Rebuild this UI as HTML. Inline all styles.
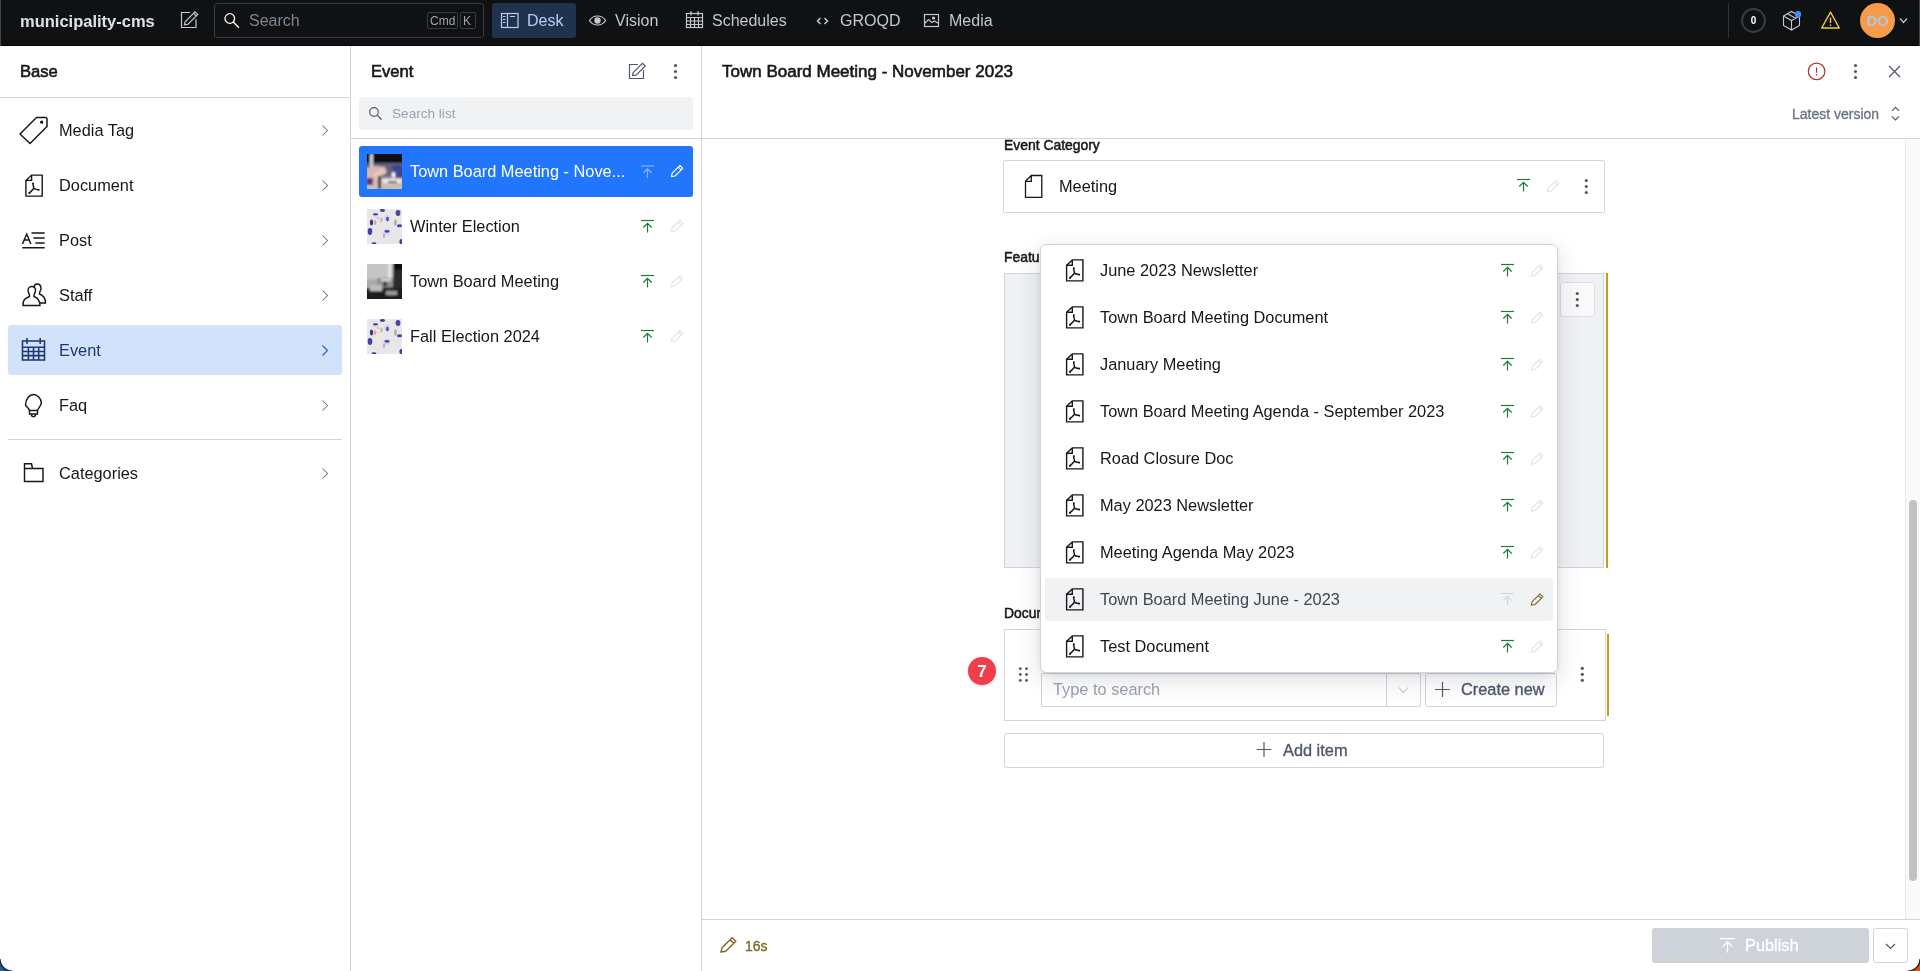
<!DOCTYPE html>
<html><head><meta charset="utf-8">
<style>
*{box-sizing:border-box;margin:0;padding:0}
html,body{width:1920px;height:971px;overflow:hidden;background:#fff}
body{position:relative;font-family:"Liberation Sans",sans-serif;color:#16171b}
.a{position:absolute}
.t{position:absolute;white-space:nowrap;line-height:20px;height:20px;margin-top:1px;will-change:transform}
.med{font-weight:normal;-webkit-text-stroke:0.35px currentColor}
.semi{font-weight:normal;-webkit-text-stroke:0.6px currentColor}
.b16{font-size:16.35px;margin-top:0}
.nav{font-size:16px;color:#c3c7cf}
svg{position:absolute}
#ov{position:absolute;left:0;top:0;width:1920px;height:971px;overflow:visible;pointer-events:none}
</style></head><body>

<!-- TOP BAR -->
<div class="a" style="left:0;top:0;width:1920px;height:46px;background:#101112;border-bottom:1px solid #050506"></div>
<div class="t" style="left:20px;top:10px;font-size:16.5px;font-weight:bold;color:#dfe1e6">municipality-cms</div>
<div class="a" style="left:214px;top:3px;width:270px;height:35px;border:1px solid #383b42;border-radius:3px"></div>
<div class="t" style="left:249px;top:10px;font-size:16px;color:#7c8494">Search</div>
<div class="a" style="left:427px;top:12px;width:31px;height:17px;border:1px solid #383b42;border-radius:2px"></div>
<div class="t" style="left:430px;top:11px;font-size:12px;color:#9ea5b1;line-height:18px">Cmd</div>
<div class="a" style="left:460px;top:12px;width:16px;height:17px;border:1px solid #383b42;border-radius:2px"></div>
<div class="t" style="left:463px;top:11px;font-size:12px;color:#9ea5b1;line-height:18px">K</div>
<div class="a" style="left:492px;top:3px;width:84px;height:35px;background:#21324d;border-radius:3px"></div>
<div class="t nav" style="left:527px;top:10px;color:#b3cffb">Desk</div>
<div class="t nav" style="left:615px;top:10px">Vision</div>
<div class="t nav" style="left:712px;top:10px">Schedules</div>
<div class="t nav" style="left:840px;top:10px">GROQD</div>
<div class="t nav" style="left:949px;top:10px">Media</div>
<div class="a" style="left:1728px;top:3px;width:1px;height:35px;background:#2f3238"></div>
<div class="a" style="left:1741px;top:8px;width:25px;height:25px;border:2px solid #393c43;border-radius:50%"></div>
<div class="t" style="left:1741px;top:10px;width:25px;text-align:center;font-size:10px;font-weight:bold;color:#fff">0</div>
<div class="a" style="left:1860px;top:3px;width:35px;height:35px;background:#f69a4b;border-radius:50%"></div>
<div class="t" style="left:1860px;top:10px;width:35px;text-align:center;font-size:15px;font-weight:bold;color:#b9c4d3;letter-spacing:-0.3px">DO</div>

<div class="a" style="left:0;top:0;width:1px;height:46px;background:#424747"></div>
<div class="a" style="left:1919px;top:0;width:1px;height:46px;background:#424747"></div>
<!-- PANE BORDERS -->
<div class="a" style="left:350px;top:46px;width:1px;height:925px;background:#d1d4db"></div>
<div class="a" style="left:701px;top:46px;width:1px;height:925px;background:#d1d4db"></div>
<div class="a" style="left:0;top:97px;width:350px;height:1px;background:#d1d4db"></div>
<div class="a" style="left:351px;top:138px;width:350px;height:1px;background:#d1d4db"></div>
<div class="a" style="left:702px;top:138px;width:1218px;height:1px;background:#d1d4db"></div>
<div class="a" style="left:702px;top:919px;width:1218px;height:1px;background:#d1d4db"></div>

<!-- PANE 1 -->
<div class="t semi" style="left:20px;top:60.5px;font-size:16.6px">Base</div>
<div class="a" style="left:8px;top:325px;width:334px;height:50px;background:#d2e2fa;border-radius:3px"></div>
<div class="a" style="left:8px;top:439px;width:334px;height:1px;background:#d1d4db"></div>
<div class="t b16" style="left:59px;top:120px">Media Tag</div>
<div class="t b16" style="left:59px;top:175px">Document</div>
<div class="t b16" style="left:59px;top:230px">Post</div>
<div class="t b16" style="left:59px;top:285px">Staff</div>
<div class="t b16" style="left:59px;top:340px;color:#1e3a75">Event</div>
<div class="t b16" style="left:59px;top:395px">Faq</div>
<div class="t b16" style="left:59px;top:463px">Categories</div>

<!-- PANE 2 -->
<div class="t semi" style="left:371px;top:60.5px;font-size:16.6px">Event</div>
<div class="a" style="left:359px;top:97px;width:334px;height:33px;background:#f1f2f4;border-radius:3px"></div>
<div class="t" style="left:392px;top:103px;font-size:13.6px;color:#9aa1ad">Search list</div>
<div class="a" style="left:359px;top:146px;width:334px;height:51px;background:#2276fc;border-radius:3px"></div>
<svg style="left:367px;top:154px" width="35" height="35" viewBox="0 0 35 35"><defs><filter id="blm" x="-20%" y="-20%" width="140%" height="140%"><feGaussianBlur stdDeviation="0.8"/></filter><clipPath id="cp"><rect width="35" height="35"/></clipPath></defs>
<g clip-path="url(#cp)"><rect width="35" height="35" fill="#8a8090"/><g filter="url(#blm)">
<rect x="-2" y="-2" width="39" height="11" fill="#0e1115"/>
<rect x="-2" y="9" width="39" height="13" fill="#62627a"/>
<rect x="25" y="11" width="12" height="14" fill="#3d4690"/>
<rect x="-2" y="24" width="39" height="13" fill="#cdbcb6"/>
<path d="M-1 14 L8 12 L18 13 L20 19 L10 24 L2 28 L-1 27 Z" fill="#dcb4b4"/>
<path d="M6 20 L16 14 L19 17 L9 25 Z" fill="#e8c6c0"/>
<rect x="-1" y="24" width="7" height="7" fill="#6a3070"/>
<rect x="11" y="22" width="3" height="13" fill="#2e3328"/>
<rect x="16" y="25" width="18" height="4" fill="#ececf0"/>
<rect x="21" y="27" width="9" height="1.6" fill="#2a2a2a"/>
<rect x="3" y="0" width="3" height="13" fill="#d0d0d4"/>
<ellipse cx="26.5" cy="21" rx="1.8" ry="3" fill="#ffffff"/>
</g></g></svg>
<svg style="left:367px;top:209px" width="35" height="35" viewBox="0 0 35 35"><rect width="35" height="35" fill="#e9e6ea"/>
<g opacity="0.9">
<ellipse cx="8.5" cy="6" rx="3.2" ry="2.2" fill="#d8d4ee"/><ellipse cx="8.5" cy="5.3" rx="2.6" ry="1.1" fill="#2c2c8c"/>
<ellipse cx="15.5" cy="1.5" rx="2.6" ry="1.4" fill="#30308e"/>
<ellipse cx="20" cy="9" rx="2.6" ry="3.4" fill="#d4d0f0"/><ellipse cx="20.5" cy="10" rx="1.4" ry="2.2" fill="#3a3aa6"/>
<ellipse cx="31" cy="4" rx="2.4" ry="3" fill="#363698"/>
<ellipse cx="4.5" cy="13.5" rx="1.6" ry="3" fill="#27277a"/><ellipse cx="8" cy="13.5" rx="1.4" ry="2.6" fill="#e0a098"/>
<ellipse cx="32.5" cy="16.8" rx="2.6" ry="1.5" fill="#3434a2"/>
<ellipse cx="3" cy="22.5" rx="2.3" ry="3.4" fill="#3030a0"/>
<ellipse cx="20" cy="23" rx="3.6" ry="3.2" fill="#d6d2f2"/><ellipse cx="20" cy="22.3" rx="2.6" ry="1.4" fill="#34349e"/>
<ellipse cx="17" cy="26.5" rx="1" ry="2.6" fill="#c0a0a0"/>
<ellipse cx="7" cy="34.5" rx="2.4" ry="1.2" fill="#30308a"/><ellipse cx="34" cy="32.5" rx="1.6" ry="2.6" fill="#2c2c96"/>
<ellipse cx="28.5" cy="13.5" rx="1.3" ry="3.2" fill="#b0a888"/><ellipse cx="14.5" cy="11" rx="1.3" ry="2.4" fill="#c8b8a0"/>
<ellipse cx="11" cy="9" rx="1.5" ry="1" fill="#e8b0b0"/>
</g></svg>
<svg style="left:367px;top:264px" width="35" height="35" viewBox="0 0 35 35"><defs><filter id="bl3" x="-20%" y="-20%" width="140%" height="140%"><feGaussianBlur stdDeviation="0.8"/></filter><clipPath id="cp3"><rect width="35" height="35"/></clipPath></defs>
<g clip-path="url(#cp3)"><rect width="35" height="35" fill="#7a7a7a"/><g filter="url(#bl3)">
<rect x="-2" y="-2" width="29" height="17" fill="#c6c6c6"/>
<rect x="21" y="-2" width="3" height="17" fill="#e4e4e4"/>
<rect x="26" y="-2" width="11" height="39" fill="#2a2a2a"/>
<rect x="27" y="-2" width="10" height="8" fill="#080808"/>
<rect x="-2" y="15" width="12" height="9" fill="#aaaaaa"/>
<rect x="10" y="14" width="16" height="8" fill="#8f8f8f"/>
<rect x="-2" y="24" width="39" height="13" fill="#1e1e1e"/>
<rect x="3" y="21" width="12" height="6" fill="#bdbdbd"/>
<ellipse cx="18" cy="20" rx="2" ry="2" fill="#111"/>
<rect x="19" y="27" width="11" height="4" fill="#9a9a9a"/>
<rect x="14" y="15" width="10" height="2" fill="#dcdcdc"/>
</g></g></svg>
<svg style="left:367px;top:319px" width="35" height="35" viewBox="0 0 35 35"><rect width="35" height="35" fill="#e9e6ea"/>
<g opacity="0.9">
<ellipse cx="8.5" cy="6" rx="3.2" ry="2.2" fill="#d8d4ee"/><ellipse cx="8.5" cy="5.3" rx="2.6" ry="1.1" fill="#2c2c8c"/>
<ellipse cx="15.5" cy="1.5" rx="2.6" ry="1.4" fill="#30308e"/>
<ellipse cx="20" cy="9" rx="2.6" ry="3.4" fill="#d4d0f0"/><ellipse cx="20.5" cy="10" rx="1.4" ry="2.2" fill="#3a3aa6"/>
<ellipse cx="31" cy="4" rx="2.4" ry="3" fill="#363698"/>
<ellipse cx="4.5" cy="13.5" rx="1.6" ry="3" fill="#27277a"/><ellipse cx="8" cy="13.5" rx="1.4" ry="2.6" fill="#e0a098"/>
<ellipse cx="32.5" cy="16.8" rx="2.6" ry="1.5" fill="#3434a2"/>
<ellipse cx="3" cy="22.5" rx="2.3" ry="3.4" fill="#3030a0"/>
<ellipse cx="20" cy="23" rx="3.6" ry="3.2" fill="#d6d2f2"/><ellipse cx="20" cy="22.3" rx="2.6" ry="1.4" fill="#34349e"/>
<ellipse cx="17" cy="26.5" rx="1" ry="2.6" fill="#c0a0a0"/>
<ellipse cx="7" cy="34.5" rx="2.4" ry="1.2" fill="#30308a"/><ellipse cx="34" cy="32.5" rx="1.6" ry="2.6" fill="#2c2c96"/>
<ellipse cx="28.5" cy="13.5" rx="1.3" ry="3.2" fill="#b0a888"/><ellipse cx="14.5" cy="11" rx="1.3" ry="2.4" fill="#c8b8a0"/>
<ellipse cx="11" cy="9" rx="1.5" ry="1" fill="#e8b0b0"/>
</g></svg>
<div class="t b16" style="left:410px;top:161px;color:#fff">Town Board Meeting - Nove...</div>
<div class="t b16" style="left:410px;top:216px">Winter Election</div>
<div class="t b16" style="left:410px;top:271px">Town Board Meeting</div>
<div class="t b16" style="left:410px;top:326px">Fall Election 2024</div>

<!-- PANE 3 HEADER -->
<div class="t semi" style="left:722px;top:60.5px;font-size:17px">Town Board Meeting - November 2023</div>
<div class="t med" style="left:1792px;top:103px;font-size:14px;color:#6e7683">Latest version</div>

<!-- scrollbar -->
<div class="a" style="left:1905px;top:139px;width:15px;height:780px;background:#fafafa;border-left:1px solid #e8e8e8"></div>
<div class="a" style="left:1909px;top:500px;width:8px;height:381px;background:#c2c2c2;border-radius:4px"></div>

<!-- FORM -->
<div class="t" style="left:1004px;top:134px;font-size:13.9px;font-weight:normal;-webkit-text-stroke:0.5px currentColor">Event Category</div>
<div class="a" style="left:1003px;top:160px;width:602px;height:53px;border:1px solid #d1d4db;border-radius:2px"></div>
<div class="t b16" style="left:1059px;top:176px">Meeting</div>

<div class="t" style="left:1004px;top:246px;font-size:13.9px;font-weight:normal;-webkit-text-stroke:0.5px currentColor">Featured Image</div>
<div class="a" style="left:1004px;top:273px;width:600px;height:295px;background:#f0f1f4;border:1px solid #d1d4db"></div>
<div class="a" style="left:1606px;top:273px;width:2px;height:295px;background:#c59d1d"></div>
<div class="a" style="left:1560px;top:282px;width:35px;height:35px;background:#fafafb;border:1px solid #dcdfe5;border-radius:3px"></div>

<div class="t" style="left:1004px;top:602px;font-size:13.9px;font-weight:normal;-webkit-text-stroke:0.5px currentColor">Documents</div>
<div class="a" style="left:1004px;top:629px;width:602px;height:92px;border:1px solid #d1d4db"></div>
<div class="a" style="left:1607px;top:634px;width:2px;height:82px;background:#c59d1d"></div>
<div class="a" style="left:1041px;top:673px;width:380px;height:34px;border:1px solid #d1d4db;border-radius:2px"></div>
<div class="a" style="left:1386px;top:673px;width:1px;height:34px;background:#d1d4db"></div>
<div class="t b16" style="left:1053px;top:679px;color:#9aa3b0">Type to search</div>
<div class="a" style="left:1425px;top:673px;width:132px;height:34px;border:1px solid #d1d4db;border-radius:3px"></div>
<div class="t b16 med" style="left:1461px;top:679px;color:#50596a">Create new</div>
<div class="a" style="left:1004px;top:733px;width:600px;height:35px;border:1px solid #d1d4db;border-radius:3px"></div>
<div class="t b16 med" style="left:1283px;top:740px;color:#50596a">Add item</div>

<div class="a" style="left:968px;top:657px;width:28px;height:28px;background:#f03e4a;border-radius:50%;box-shadow:0 1px 3px rgba(0,0,0,.15)"></div>
<div class="t" style="left:968px;top:661px;width:28px;text-align:center;font-size:17px;font-weight:bold;color:#fff">7</div>

<!-- POPOVER -->
<div class="a" style="left:1040px;top:244px;width:518px;height:429px;background:#fff;border:1px solid #d1d4db;border-radius:6px;box-shadow:0 7px 24px rgba(22,30,45,.14),0 2px 6px rgba(22,30,45,.08)"></div>
<div class="a" style="left:1045px;top:578px;width:508px;height:43px;background:#f1f2f4;border-radius:3px"></div>
<div class="t b16" style="left:1100px;top:260px">June 2023 Newsletter</div>
<div class="t b16" style="left:1100px;top:307px">Town Board Meeting Document</div>
<div class="t b16" style="left:1100px;top:354px">January Meeting</div>
<div class="t b16" style="left:1100px;top:401px">Town Board Meeting Agenda - September 2023</div>
<div class="t b16" style="left:1100px;top:448px">Road Closure Doc</div>
<div class="t b16" style="left:1100px;top:495px">May 2023 Newsletter</div>
<div class="t b16" style="left:1100px;top:542px">Meeting Agenda May 2023</div>
<div class="t b16" style="left:1100px;top:589px;color:#3f4654">Town Board Meeting June - 2023</div>
<div class="t b16" style="left:1100px;top:636px">Test Document</div>

<!-- FOOTER -->
<div class="t med" style="left:745px;top:935px;font-size:14px;color:#7c6a24">16s</div>
<div class="a" style="left:1652px;top:928px;width:217px;height:35px;background:#ced2d9;border-radius:3px"></div>
<div class="t b16 med" style="left:1745px;top:935px;color:#fff">Publish</div>
<div class="a" style="left:1873px;top:928px;width:35px;height:35px;border:1px solid #d1d4db;border-radius:3px"></div>

<svg id="ov" viewBox="0 0 1920 971" fill="none" stroke-linecap="butt" stroke-linejoin="miter">
<defs>
 <g id="pdf" stroke="#16171b" stroke-width="1.4">
  <path d="M0.6 5.9 L6.3 0.6 H16.9 V21.6 H0.6 Z"/>
  <path d="M6.3 0.6 V5.9 H0.6"/>
  <path d="M7.7 9 C7.4 10.6 8.7 12.1 8.4 13.9 C7 15.6 5.6 17.1 3.9 18.6 M8.4 13.9 C10 14.6 11.6 15.1 13.4 15.3" stroke-width="1.5" stroke-linecap="round"/>
  <circle cx="7.8" cy="8.8" r="0.9" fill="#16171b" stroke="none"/><circle cx="4" cy="18.5" r="1" fill="#16171b" stroke="none"/><circle cx="13.2" cy="15.3" r="0.9" fill="#16171b" stroke="none"/>
 </g>
 <g id="pub" stroke-width="1.2"><path d="M0 0.5 H13"/><path d="M6.5 3 V12.5 M2.3 7.5 L6.5 3.3 L10.7 7.5"/></g>
 <g id="pen" stroke-width="1.1" stroke-linejoin="round"><path d="M0.3 11.6 L1.2 8.2 L9 0.5 L11.8 3.3 L4 11 Z M7.4 2.1 L10.2 4.9"/></g>
 <g id="kebab"><circle cx="0" cy="0" r="1.6"/><circle cx="0" cy="6" r="1.6"/><circle cx="0" cy="12" r="1.6"/></g>
</defs>

<!-- topbar icons -->
<g stroke="#c3c7cf" stroke-width="1.2">
 <path d="M190 12.5 H181.5 V27.5 H196 V19.2"/>
 <path d="M184.4 24.8 L185.1 21.8 L195 11.9 L197.7 14.6 L187.7 24.4 Z M193.6 13.3 L196.3 16"/>
</g>
<g stroke="#fff" stroke-width="1.3"><circle cx="229.8" cy="18.5" r="4.8"/><path d="M233.2 22 L239 27.8"/></g>
<g stroke="#b3cffb" stroke-width="1.2"><rect x="501.5" y="13.5" width="16.5" height="14"/><path d="M507.5 13.5 V27.5 M503 16.5 H505.5 M503 19.5 H505.5 M503 22.5 H505.5 M510 16.5 H515"/></g>
<g stroke="#c3c7cf" stroke-width="1.2">
 <path d="M589.5 20.5 C593 14.5 602 14.5 605.5 20.5 C602 26.5 593 26.5 589.5 20.5 Z"/>
 <circle cx="597.5" cy="20.5" r="2.6" fill="#c3c7cf"/>
 <rect x="686.5" y="13.5" width="16" height="14"/>
 <path d="M691 11 V15.5 M698 11 V15.5 M686.5 17.5 H702.5 M686.5 21 H702.5 M686.5 24.5 H702.5 M690.5 17.5 V27.5 M694.5 17.5 V27.5 M698.5 17.5 V27.5"/>
 <path d="M820.5 18 L817.5 21 L820.5 24 M824.5 18 L827.5 21 L824.5 24" stroke-width="1.5"/>
 <rect x="924.5" y="14.5" width="14" height="12"/>
 <path d="M924.5 23.5 L928.5 19.5 L932 22.5 L934.5 21 L938.5 23.5"/>
 <circle cx="933.5" cy="18" r="1" fill="#c3c7cf"/>
 <path d="M1900 18.5 L1903.5 22.5 L1907 18.5"/>
</g>
<g stroke="#c3c7cf" stroke-width="1.1">
 <path d="M1783.5 16 L1791.5 11.5 L1799.5 16 V25.5 L1791.5 30 L1783.5 25.5 Z M1783.5 16 L1791.5 20.5 L1799.5 16 M1791.5 20.5 V30 M1787.5 13.7 L1795.5 18.2"/>
</g>
<circle cx="1798" cy="14.3" r="3.2" fill="#3f8cff"/>
<g stroke="#f2c94c" stroke-width="1.4" stroke-linejoin="round"><path d="M1830.5 12.2 L1839.3 28 H1821.7 Z"/><path d="M1830.5 17.5 V23 M1830.5 24.5 V26"/></g>

<!-- pane1 icons -->
<g stroke="#16171b" stroke-width="1.5" stroke-linejoin="round">
 <path d="M20 134 L36.5 117.5 H46 L47 118.5 V126.5 L30 143.5 Z"/>
 <circle cx="41.7" cy="122.2" r="0.9" fill="#16171b"/>
</g>
<use href="#pdf" x="25.3" y="174.5" transform="translate(0,0)"/>
<g stroke="#16171b" stroke-width="1.45">
 <path d="M22.5 244 L26.7 234 L30.9 244 M24 240 H29.5"/>
 <path d="M31.5 233 H44.7 M33.3 238 H44.7 M35.4 243 H44.7 M22.3 247.8 H44.7"/>
 <path d="M23 305.5 C22.5 300 25 298.5 29.5 296.5 C30 294.5 28 292.5 28 290.5 C28 288 30 286.5 31.8 286.5 C34 286.5 35.5 288 35.5 290.5 C35.5 292.5 33.5 294.5 34 296.5 C38 298 40 300.5 40 305.5 Z"/>
 <path d="M33.8 287.3 C34.3 285.2 35.5 284 37 284 C39.5 284 41 286 41 288.5 C41 290.5 39 292 39.5 294 C43.5 295.5 45.5 297.5 45.5 303 H40"/>
 <path d="M25.5 405 C25.5 398.5 30 394.5 33.5 394.5 C37 394.5 41.3 398.5 41.3 403 C41.3 406 38 408 37.5 410.5 H29.5 C29 408 25.5 406 25.5 405 Z M29.5 410.5 V414 H37.5 V410.5 M31.3 414 C31.3 417.5 35.6 417.5 35.6 414"/>
 <path d="M24.5 468.5 V463.8 H31.5 L32.5 468.5 H43 V481.5 H24.5 Z M24.5 468.5 H32.5"/>
</g>
<g stroke="#1e3a75" stroke-width="1.55">
 <rect x="22.5" y="341" width="22" height="19"/>
 <path d="M27 338 V344 M40.2 338 V344 M22.5 347.3 H44.5 M22.5 351.4 H44.5 M22.5 355.6 H44.5 M28.4 347.3 V360 M33.5 347.3 V360 M38.7 347.3 V360"/>
</g>
<g stroke="#6e7683" stroke-width="1.05">
 <path d="M322.5 125.5 L327.5 130.5 L322.5 135.5 M322.5 180.5 L327.5 185.5 L322.5 190.5 M322.5 235.5 L327.5 240.5 L322.5 245.5 M322.5 290.5 L327.5 295.5 L322.5 300.5 M322.5 400.5 L327.5 405.5 L322.5 410.5 M322.5 468.5 L327.5 473.5 L322.5 478.5"/>
</g>
<path d="M322.5 345.5 L327.5 350.5 L322.5 355.5" stroke="#2d5fc4" stroke-width="1.2"/>

<!-- pane2 icons -->
<g stroke="#50596a" stroke-width="1.2">
 <path d="M637.9 64.5 H629.5 V78.5 H643.5 V70.3"/>
 <path d="M632.5 75.5 L633.2 72.5 L642.5 63.3 L645.3 66 L636 75.2 Z"/>
</g>
<use href="#kebab" x="675.5" y="65.5" fill="#50596a"/>
<g stroke="#50596a" stroke-width="1.2"><circle cx="374" cy="112" r="4.3"/><path d="M377.2 115.2 L381.5 119.5"/></g>
<use href="#pub" x="641" y="165.5" stroke="#8ab4fb"/>
<use href="#pen" x="671" y="165" stroke="#fff"/>
<use href="#pub" x="641" y="220" stroke="#1f7a3e"/>
<use href="#pen" x="671" y="220" stroke="#e1e4e8"/>
<use href="#pub" x="641" y="275" stroke="#1f7a3e"/>
<use href="#pen" x="671" y="275" stroke="#e1e4e8"/>
<use href="#pub" x="641" y="330" stroke="#1f7a3e"/>
<use href="#pen" x="671" y="330" stroke="#e1e4e8"/>

<!-- pane3 header icons -->
<g stroke="#b0342a" stroke-width="1.2"><circle cx="1816.6" cy="71.4" r="8.3"/><path d="M1816.6 67.5 V72.7 M1816.6 74 V75.5"/></g>
<use href="#kebab" x="1855.5" y="65.5" fill="#50596a"/>
<g stroke="#50596a" stroke-width="1.3"><path d="M1889 66 L1900 77 M1900 66 L1889 77"/></g>
<g stroke="#50596a" stroke-width="1.2"><path d="M1892 110.8 L1895.5 107.3 L1899 110.8 M1892 116.4 L1895.5 119.9 L1899 116.4"/></g>

<!-- form icons -->
<g stroke="#16171b" stroke-width="1.3"><path d="M1025.5 181.3 L1031.3 175.5 H1041.8 V197.3 H1025.5 Z M1031.3 175.5 V181.3 H1025.5"/></g>
<use href="#pub" x="1517" y="179" stroke="#1f7a3e"/>
<use href="#pen" x="1547" y="180" stroke="#e1e4e8"/>
<use href="#kebab" x="1586.3" y="180.5" fill="#50596a"/>
<use href="#kebab" x="1577.3" y="293.5" fill="#50596a"/>
<use href="#kebab" x="1582.3" y="668.3" fill="#50596a"/>
<g fill="#50596a"><circle cx="1020.3" cy="668.7" r="1.4"/><circle cx="1026.5" cy="668.7" r="1.4"/><circle cx="1020.3" cy="674.5" r="1.4"/><circle cx="1026.5" cy="674.5" r="1.4"/><circle cx="1020.3" cy="680.4" r="1.4"/><circle cx="1026.5" cy="680.4" r="1.4"/></g>
<g stroke="#50596a" stroke-width="1.2"><path d="M1442.5 682 V697 M1435 689.5 H1450 M1264 742 V757 M1256.5 749.5 H1271.5"/></g>
<path d="M1398.8 687.5 L1403.5 692.5 L1408.2 687.5" stroke="#c5cad2" stroke-width="1.1"/>

<!-- popover icons -->
<use href="#pdf" x="1066" y="259.3"/>
<use href="#pdf" x="1066" y="306.3"/>
<use href="#pdf" x="1066" y="353.3"/>
<use href="#pdf" x="1066" y="400.3"/>
<use href="#pdf" x="1066" y="447.3"/>
<use href="#pdf" x="1066" y="494.3"/>
<use href="#pdf" x="1066" y="541.3"/>
<use href="#pdf" x="1066" y="588.3"/>
<use href="#pdf" x="1066" y="635.3"/>
<use href="#pub" x="1501" y="264" stroke="#1f7a3e"/><use href="#pen" x="1531" y="264.5" stroke="#e1e4e8"/>
<use href="#pub" x="1501" y="311" stroke="#1f7a3e"/><use href="#pen" x="1531" y="311.5" stroke="#e1e4e8"/>
<use href="#pub" x="1501" y="358" stroke="#1f7a3e"/><use href="#pen" x="1531" y="358.5" stroke="#e1e4e8"/>
<use href="#pub" x="1501" y="405" stroke="#1f7a3e"/><use href="#pen" x="1531" y="405.5" stroke="#e1e4e8"/>
<use href="#pub" x="1501" y="452" stroke="#1f7a3e"/><use href="#pen" x="1531" y="452.5" stroke="#e1e4e8"/>
<use href="#pub" x="1501" y="499" stroke="#1f7a3e"/><use href="#pen" x="1531" y="499.5" stroke="#e1e4e8"/>
<use href="#pub" x="1501" y="546" stroke="#1f7a3e"/><use href="#pen" x="1531" y="546.5" stroke="#e1e4e8"/>
<use href="#pub" x="1501" y="593" stroke="#d2d6dc"/><use href="#pen" x="1531" y="593.5" stroke="#7c6a24"/>
<use href="#pub" x="1501" y="640" stroke="#1f7a3e"/><use href="#pen" x="1531" y="640.5" stroke="#e1e4e8"/>

<!-- footer icons -->
<g transform="translate(720.5,937) scale(1.3)"><use href="#pen" stroke="#7c6a24" stroke-width="1"/></g>
<g transform="translate(1720,938) scale(1.15)"><use href="#pub" stroke="#fff" stroke-width="1.1"/></g>
<path d="M1886 944 L1890.5 948.5 L1895 944" stroke="#50596a" stroke-width="1.2"/>
</svg>
<svg style="left:0;top:959px" width="12" height="12" viewBox="0 0 12 12"><path d="M0 0 A12 12 0 0 0 12 12 H0 Z" fill="#245a8c"/><path d="M0 0 A12 12 0 0 0 12 12" stroke="#0b1a2a" stroke-width="1.2" fill="none"/></svg>
<svg style="left:1908px;top:959px" width="12" height="12" viewBox="0 0 12 12"><path d="M12 0 A12 12 0 0 1 0 12 H12 Z" fill="#c85418"/><path d="M12 0 A12 12 0 0 1 0 12" stroke="#2a1208" stroke-width="1.2" fill="none"/></svg>
</body></html>
